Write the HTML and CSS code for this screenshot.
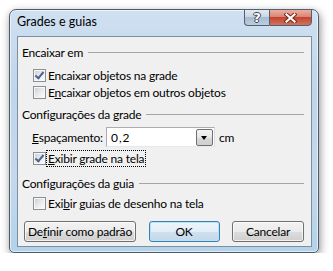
FILE: index.html
```html
<!DOCTYPE html>
<html lang="pt">
<head>
    <meta charset="UTF-8">
    <title>Grades e guias</title>
    <link rel="stylesheet" href="styles.css">
</head>
<body>
    <div class="window">
        <div class="titlebar">
            <span class="title">Grades e guias</span>
            <div class="caption">
                <span class="cap-btn help"><span class="qmark">?</span></span>
                <span class="cap-btn close">
                    <svg width="13" height="10" viewBox="0 0 13 10">
                        <path d="M2.5 1.5 L10.5 8.5 M10.5 1.5 L2.5 8.5" stroke="#6e2418" stroke-width="4" stroke-linecap="square"/>
                        <path d="M2.5 1.5 L10.5 8.5 M10.5 1.5 L2.5 8.5" stroke="#fff" stroke-width="2.2" stroke-linecap="square"/>
                    </svg>
                </span>
            </div>
        </div>

        <div class="client">
            <div class="group-head"><span>Encaixar em</span><span class="rule"></span></div>
            <div class="check row-cb1">
                <span class="box checked"></span>
                <span class="lbl">Encaixar objetos na <u>g</u>rade</span>
            </div>
            <div class="check row-cb2">
                <span class="box"></span>
                <span class="lbl">E<u>n</u>caixar objetos em outros objetos</span>
            </div>

            <div class="group-head row-head2"><span>Configurações da grade</span><span class="rule"></span></div>
            <div class="spacing-row">
                <span class="spacing-lbl"><u>E</u>spaçamento:</span>
                <div class="combo">
                    <span class="combo-val">0,2</span>
                    <span class="combo-btn"><span class="arrow"></span></span>
                </div>
                <span class="unit">cm</span>
            </div>
            <div class="check row-cb3">
                <span class="box checked"></span>
                <span class="lbl focused"><u>E</u>xibir grade na tela</span>
            </div>

            <div class="group-head row-head3"><span>Configurações da guia</span><span class="rule"></span></div>
            <div class="check row-cb4">
                <span class="box"></span>
                <span class="lbl">Exi<u>b</u>ir guias de desenho na tela</span>
            </div>

            <div class="buttons">
                <span class="btn btn-wide"><span>De<u>f</u>inir como padrão</span></span>
                <span class="btn btn-default"><span>OK</span></span>
                <span class="btn"><span>Cancelar</span></span>
            </div>
        </div>
    </div>
</body>
</html>
```

FILE: styles.css
```css
body {
    margin: 0;
    background: #fff;
    font-family: Lato, "Noto Sans", sans-serif;
    font-size: 12px;
    color: #000;
}
u {
    text-underline-offset: 1px;
}
.window {
    margin: 9px 0 0 9px;
    width: 310px;
    height: 244px;
    box-sizing: border-box;
    border: 1px solid #4f5a68;
    border-radius: 7px 7px 5px 5px;
    background: linear-gradient(to bottom, #cfe0f1 0%, #bed5eb 35%, #c4d8ec 70%, #b2d3ea 100%);
    box-shadow: inset 0 0 0 1px rgba(255,255,255,0.6), 1px 3px 8px rgba(0,0,0,0.45);
    display: flex;
    flex-direction: column;
    padding: 0 6px 5px 7px;
}
.titlebar {
    height: 26px;
    display: flex;
    justify-content: space-between;
    align-items: flex-start;
}
.title {
    margin-top: 4px;
    line-height: 16px;
    font-size: 12.5px;
}
.caption {
    display: flex;
    margin-top: -1px;
}
.cap-btn {
    height: 17px;
    box-sizing: border-box;
    border: 1px solid #52606f;
    display: flex;
    align-items: center;
    justify-content: center;
}
.help {
    width: 25px;
    border-right: none;
    border-radius: 0 0 0 4px;
    background: linear-gradient(to bottom, #e2e9f1 0%, #cad6e3 45%, #a9bbce 50%, #bccde0 100%);
}
.qmark {
    font-family: "DejaVu Sans", sans-serif;
    font-weight: bold;
    font-size: 13px;
    line-height: 13px;
    color: #fff;
    text-shadow: 1px 0 0 #3d4650, -1px 0 0 #3d4650, 0 1px 0 #3d4650, 0 -1px 0 #3d4650;
}
.close {
    width: 43px;
    border-radius: 0 0 4px 0;
    background: linear-gradient(to bottom, #eab0a3 0%, #dc8474 45%, #c4452f 50%, #d2735e 100%);
}
.client {
    flex: 1;
    background: #f0f0f0;
    border: 1px solid #7e8ea1;
    padding: 7px 7px 4px 4px;
    display: flex;
    flex-direction: column;
    letter-spacing: -0.2px;
}
.group-head {
    display: flex;
    align-items: center;
    height: 16px;
    gap: 5px;
    white-space: nowrap;
}
.rule {
    flex: 1;
    border-top: 1px solid #a5a5a5;
    margin-top: 1px;
}
.check {
    display: flex;
    align-items: center;
    height: 16px;
    white-space: nowrap;
}
.box {
    flex: none;
    width: 13px;
    height: 13px;
    box-sizing: border-box;
    margin-left: 11px;
    border: 1px solid #8e8f8f;
    background: #f7f7f7;
    position: relative;
}
.box::before {
    content: "";
    position: absolute;
    inset: 1px;
    background: linear-gradient(135deg, #cdd1d6 0%, #e8eaec 50%, #fafafa 100%);
}
.box.checked::after {
    content: "";
    position: absolute;
    left: 3px;
    top: 0px;
    width: 3px;
    height: 7px;
    border: solid #4d6292;
    border-width: 0 2px 2px 0;
    transform: rotate(40deg);
    transform-origin: center;
}
.lbl {
    padding: 0 1px;
    border: 1px dotted transparent;
    line-height: 15px;
}
.lbl.focused {
    border-color: #000;
}
.row-cb1 { margin-top: 7px; }
.row-cb2 { margin-top: 1px; }
.row-head2 { margin-top: 6px; }
.spacing-row {
    margin-top: 5px;
    display: flex;
    align-items: center;
    height: 20px;
    white-space: nowrap;
}
.spacing-lbl {
    margin-left: 10px;
    margin-right: 3px;
}
.combo {
    flex: none;
    width: 109px;
    height: 20px;
    box-sizing: border-box;
    border: 1px solid #abadb3;
    border-right-color: #dbdfe6;
    border-bottom-color: #e3e9ef;
    background: #fff;
    display: flex;
    align-items: center;
    padding: 0 1px 0 4px;
}
.combo-val {
    letter-spacing: 1px;
}
.combo-btn {
    margin-left: auto;
    width: 17px;
    height: 17px;
    box-sizing: border-box;
    border: 1px solid #707070;
    border-radius: 2px;
    background: linear-gradient(to bottom, #f3f3f3 0%, #e8e8e8 50%, #d8d8d8 51%, #cfcfcf 100%);
    display: flex;
    align-items: center;
    justify-content: center;
}
.arrow {
    width: 0;
    height: 0;
    border-left: 3.5px solid transparent;
    border-right: 3.5px solid transparent;
    border-top: 4px solid #000;
    margin-top: 1px;
}
.unit {
    margin-left: 4px;
}
.row-cb3 { margin-top: 3px; height: 17px; }
.row-head3 { margin-top: 8px; }
.row-cb4 { margin-top: 4px; }
.buttons {
    margin-top: 10px;
    padding-left: 2px;
    display: flex;
    justify-content: space-between;
    white-space: nowrap;
}
.btn {
    width: 72px;
    height: 21px;
    box-sizing: border-box;
    border: 1px solid #707070;
    border-radius: 3px;
    background: linear-gradient(to bottom, #f2f2f2 0%, #ebebeb 50%, #dddddd 51%, #cfcfcf 100%);
    box-shadow: inset 0 0 0 1px rgba(255,255,255,0.7);
    display: flex;
    align-items: center;
    justify-content: center;
}
.btn-wide {
    width: 112px;
}
.btn-default {
    width: 71px;
    border-color: #3c7fb1;
    background: linear-gradient(to bottom, #eef5fa 0%, #e2edf6 50%, #cfe1ef 51%, #c3d8ea 100%);
    box-shadow: inset 0 0 0 1px #b6e3f8;
}
```
